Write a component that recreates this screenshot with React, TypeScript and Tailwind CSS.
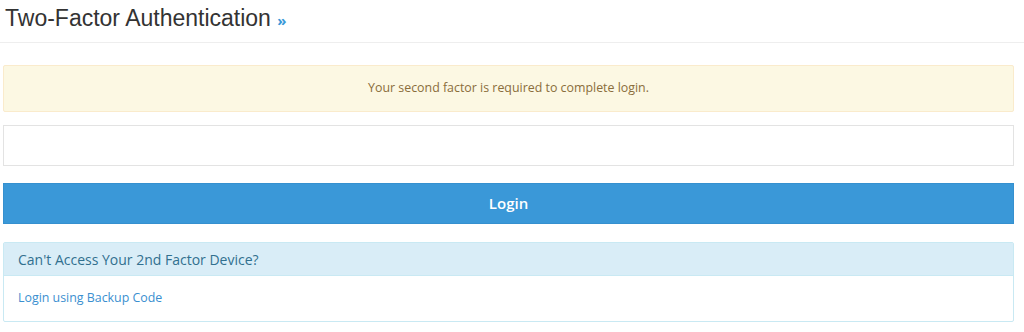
import React from "react";

export default function App() {
  return (
    <div className="w-[1024px] h-[332px] bg-white overflow-hidden" style={{ fontFamily: '"Open Sans", sans-serif' }}>
      <div className="h-[43px] border-b border-[#eeeeee] pl-[5px] pt-[3px]">
        <h1 className="text-[23px] leading-[30px] text-[#333333] font-normal" style={{ fontFamily: '"Liberation Sans", Arial, sans-serif' }}>
          Two-Factor Authentication <span className="text-[15px] text-[#3a98d8] font-bold" style={{ fontFamily: '"Open Sans", sans-serif' }}>»</span>
        </h1>
      </div>
      <div className="pl-[3px] pr-[10px] pt-[22px] flex flex-col">
        <div className="h-[47px] bg-[#fcf8e3] border border-[#faebcc] rounded-[2px] flex items-center justify-center text-[12.4px] text-[#8a6d3b]">
          Your second factor is required to complete login.
        </div>
        <div className="mt-[13px] h-[41px] border border-[#e3e3e3] bg-white" />
        <button className="mt-[17px] h-[41px] w-full bg-[#3a98d8] border border-[#3590cf] text-white text-[15px] font-semibold flex items-center justify-center">
          Login
        </button>
        <div className="mt-[18px] border border-[#c9e9f3] rounded-[2px]">
          <div className="h-[33px] bg-[#d9edf7] border-b border-[#c9e9f3] pl-[14px] flex items-center text-[14px] text-[#31708f]">
            Can't Access Your 2nd Factor Device?
          </div>
          <div className="h-[45px] pl-[14px] flex items-center text-[12.4px] text-[#3a8fd0]">
            Login using Backup Code
          </div>
        </div>
      </div>
    </div>
  );
}
